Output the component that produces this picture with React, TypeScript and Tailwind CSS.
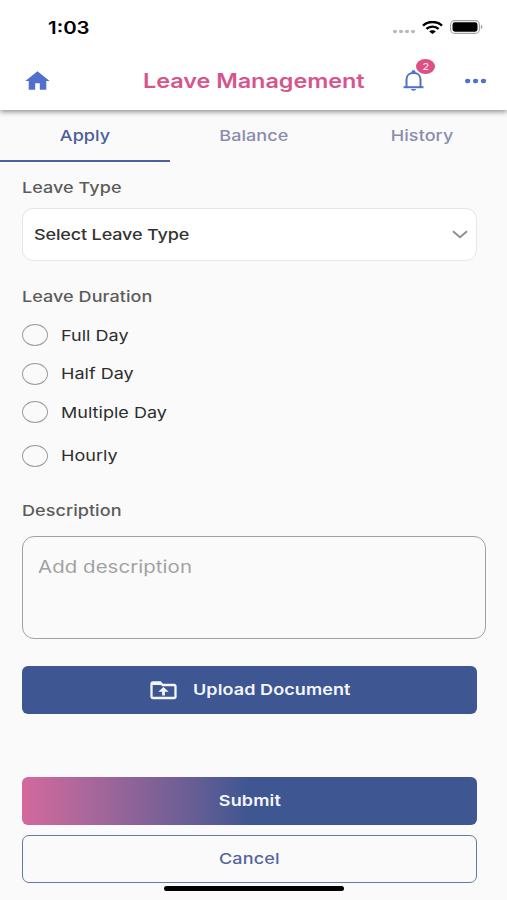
import type { ReactNode } from "react";

const radios = [
  { label: "Full Day", row: "h-[38px]" },
  { label: "Half Day", row: "h-[39px]" },
  { label: "Multiple Day", row: "h-[38px]" },
  { label: "Hourly", row: "mt-[5px] h-[39px]" },
];

function Wide({ children, className = "" }: { children: ReactNode; className?: string }) {
  return <span className={`inline-block scale-x-[1.2] whitespace-nowrap ${className}`}>{children}</span>;
}

function StatusBar() {
  return (
    <div className="flex h-[54px] items-center pl-[48px] pr-[24px]">
      <Wide className="mt-[3px] origin-left text-[17px] font-semibold text-black">1:03</Wide>
      <div className="ml-auto flex items-center">
        <svg className="mt-[9px]" width="24" height="5" viewBox="0 0 24 5" fill="#b9b9b9">
          <ellipse cx="3" cy="2.5" rx="2.1" ry="1.7" />
          <ellipse cx="9" cy="2.5" rx="2.1" ry="1.7" />
          <ellipse cx="15" cy="2.5" rx="2.1" ry="1.7" />
          <ellipse cx="21" cy="2.5" rx="2.1" ry="1.7" />
        </svg>
        <svg className="ml-[6px]" width="21" height="13" viewBox="0 0 21 13" fill="none" stroke="#000">
          <path d="M1 4.6C6.2-.2 14.8-.2 20 4.6" strokeWidth="2.5" />
          <path d="M4.4 7.9c3.4-3.1 8.8-3.1 12.2 0" strokeWidth="2.4" />
          <path d="M10.500 13l-3.300-2.500c1.700-1.700 4.900-1.700 6.600 0z" fill="#000" stroke="none" />
        </svg>
        <svg className="ml-[7px]" width="33" height="14" viewBox="0 0 33 14">
          <rect x="0.600" y="0.600" width="28.800" height="12.800" rx="4" fill="none" stroke="#a3a3a3" strokeWidth="1.100" />
          <rect x="2.500" y="2.300" width="25" height="9.400" rx="2.400" fill="#000" />
          <path d="M30.800 4.800c2.100.7 2.100 3.700 0 4.400z" fill="#a3a3a3" />
        </svg>
      </div>
    </div>
  );
}

function Header() {
  return (
    <div className="relative z-10 h-[110px] bg-white shadow-[0_2px_5px_rgba(0,0,0,0.42)]">
      <StatusBar />
      <div className="flex h-[52px] items-center pl-[25px] pr-[20px]">
        <svg width="25" height="19" viewBox="0 0 25 19" fill="#5070cb" className="shrink-0">
          <path d="M12.500.2 24.700 10h-3.400v8.800h-6.500v-6.600h-4.600v6.600H3.700V10H.3z" />
        </svg>
        <div className="ml-[93px] mt-[4px] w-[221px]">
          <Wide className="origin-left text-[19.5px] font-semibold tracking-[-0.030px] text-[#d6558c]">Leave Management</Wide>
        </div>
        <div className="relative ml-[38px] h-[21px] w-[23px]">
          <svg width="23" height="21" viewBox="0 0 23 21">
            <path d="M4.500 17V9.300C4.500 5.500 7.400 2.900 11.500 2.900s7 2.600 7 6.400V17" fill="none" stroke="#5070cb" strokeWidth="2" />
            <path d="M1.500 17.200h20" stroke="#5070cb" strokeWidth="2" />
            <path d="M9.600 3V1.700c0-1.800 3.800-1.800 3.800 0V3zM8.900 19h5.200c-.3 2.300-4.900 2.300-5.200 0z" fill="#5070cb" />
          </svg>
          <div className="absolute -top-[11px] left-[14px] flex h-[15px] w-[19px] items-center justify-center rounded-[50%] bg-[#df4f83] text-[9px] leading-none text-white">
            <Wide>2</Wide>
          </div>
        </div>
        <svg className="ml-auto mt-[2px]" width="23" height="6" viewBox="0 0 23 6" fill="#5070cb">
          <ellipse cx="3.700" cy="3" rx="2.600" ry="2.300" />
          <ellipse cx="11.600" cy="3" rx="2.600" ry="2.300" />
          <ellipse cx="19.500" cy="3" rx="2.600" ry="2.300" />
        </svg>
      </div>
    </div>
  );
}

function Tabs() {
  return (
    <div className="grid h-[52px] grid-cols-3 text-center text-[15px] font-medium tracking-[0.060px] text-[#8a8cab]">
      <div className="flex w-[170px] items-start justify-center border-b-2 border-[#4d60a0] pt-[15px] leading-[22px] text-[#4a5d9c]">
        <Wide>Apply</Wide>
      </div>
      <div className="pt-[15px] leading-[22px]"><Wide>Balance</Wide></div>
      <div className="pt-[15px] leading-[22px]"><Wide>History</Wide></div>
    </div>
  );
}

function Label({ children }: { children: ReactNode }) {
  return (
    <div className="h-[22px] text-[15px] font-medium leading-[22px] tracking-[0.050px] text-[#5c5c5c]">
      <Wide className="origin-left">{children}</Wide>
    </div>
  );
}

export default function App() {
  return (
    <div className="h-[900px] w-[507px] overflow-hidden bg-[#fafafa] font-['Inter',sans-serif]">
      <Header />
      <Tabs />
      <main className="pl-[22px] pr-[30px] pt-[15px]">
        <Label>Leave Type</Label>
        <div className="mt-[9px] flex h-[53px] items-center justify-between rounded-[11px] border border-[#e6e6e6] bg-white pl-[11px] pr-[8px]">
          <Wide className="mt-px origin-left text-[15px] font-medium tracking-[-0.120px] text-[#333333]">Select Leave Type</Wide>
          <svg width="16" height="9" viewBox="0 0 16 9" fill="none" stroke="#8f8f8f" strokeWidth="2">
            <path d="M1 1.300 8 7.200l7-5.900" />
          </svg>
        </div>
        <div className="mt-[25px]"><Label>Leave Duration</Label></div>
        <div className="mt-[8px]">
          {radios.map((r) => (
            <div key={r.label} className={`flex items-center ${r.row}`}>
              <span className="h-[22px] w-[26px] rounded-[50%] border border-[#9c9c9c]" />
              <Wide className="ml-[13px] mt-[2px] origin-left text-[15px] tracking-[0.020px] text-[#2d2d2d]">{r.label}</Wide>
            </div>
          ))}
        </div>
        <div className="mt-[25px]"><Label>Description</Label></div>
        <div className="mt-[14px] -mr-[9px] h-[103px] rounded-[12px] border border-[#a0a0a0] pl-[15px] pt-[18px] text-[17px] leading-[24px] tracking-[0.060px] text-[#a2a2a2]">
          <Wide className="origin-left">Add description</Wide>
        </div>
        <div className="mt-[27px] flex h-[48px] items-center rounded-[6px] bg-[#3e5691] pl-[128px] text-[15px] font-semibold tracking-[0.080px] text-[#f4f6ff]">
          <svg width="27" height="19" viewBox="0 0 27 19" fill="none">
            <path d="M1.500 3q0-1.500 1.500-1.500h7.200L12.600 4H24q1.500 0 1.500 1.500v10q0 1.500-1.500 1.500H3q-1.500 0-1.500-1.500z" stroke="#f4f6ff" strokeWidth="2.300" />
            <path d="M1.500 4h11L10.200 1.500H2z" fill="#f4f6ff" />
            <path d="M13.500 6 18.700 10.700h-3.800v3.800h-2.800v-3.800H8.300z" fill="#f4f6ff" />
          </svg>
          <Wide className="ml-[16px] origin-left">Upload Document</Wide>
        </div>
        <div className="mt-[63px] flex h-[48px] items-center justify-center rounded-[6px] bg-linear-to-r from-[#d3699d] to-[#3e5691] to-50% text-[15px] font-semibold tracking-[0.120px] text-[#f4f6ff]">
          <Wide>Submit</Wide>
        </div>
        <div className="mt-[10px] flex h-[48px] items-center justify-center rounded-[7px] border border-[#6677a8] text-[15px] font-medium tracking-[0.120px] text-[#53669f]">
          <Wide>Cancel</Wide>
        </div>
      </main>
      <div className="relative mx-auto mt-[3px] h-[5px] w-[180px] rounded-full bg-black" />
    </div>
  );
}
